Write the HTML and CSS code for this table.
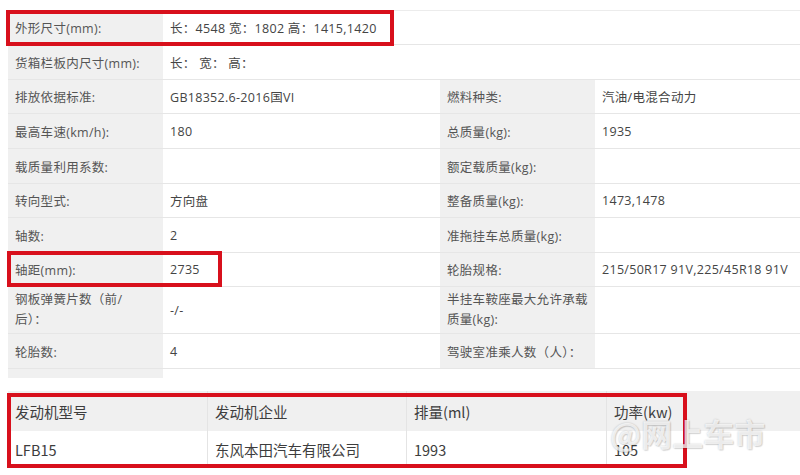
FILE: index.html
```html
<!DOCTYPE html>
<html lang="zh-CN">
<head>
<meta charset="utf-8">
<title>车辆参数</title>
<link rel="stylesheet" href="styles.css">
</head>
<body>
<div class="page">
  <div class="spec">
    <div class="cell lab r1">外形尺寸(mm):</div>
    <div class="cell val wide r1">长：4548 宽：1802 高：1415,1420</div>

    <div class="cell lab">货箱栏板内尺寸(mm):</div>
    <div class="cell val wide">长：&nbsp;宽：&nbsp;高：</div>

    <div class="cell lab">排放依据标准:</div>
    <div class="cell val">GB18352.6-2016国VI</div>
    <div class="cell lab">燃料种类:</div>
    <div class="cell val">汽油/电混合动力</div>

    <div class="cell lab">最高车速(km/h):</div>
    <div class="cell val">180</div>
    <div class="cell lab">总质量(kg):</div>
    <div class="cell val">1935</div>

    <div class="cell lab">载质量利用系数:</div>
    <div class="cell val"></div>
    <div class="cell lab">额定载质量(kg):</div>
    <div class="cell val"></div>

    <div class="cell lab">转向型式:</div>
    <div class="cell val">方向盘</div>
    <div class="cell lab">整备质量(kg):</div>
    <div class="cell val">1473,1478</div>

    <div class="cell lab">轴数:</div>
    <div class="cell val">2</div>
    <div class="cell lab">准拖挂车总质量(kg):</div>
    <div class="cell val"></div>

    <div class="cell lab">轴距(mm):</div>
    <div class="cell val">2735</div>
    <div class="cell lab">轮胎规格:</div>
    <div class="cell val">215/50R17 91V,225/45R18 91V</div>

    <div class="cell lab two">钢板弹簧片数（前/<br>后）：</div>
    <div class="cell val">-/-</div>
    <div class="cell lab two">半挂车鞍座最大允许承载<br>质量(kg):</div>
    <div class="cell val"></div>

    <div class="cell lab">轮胎数:</div>
    <div class="cell val">4</div>
    <div class="cell lab">驾驶室准乘人数（人）：</div>
    <div class="cell val"></div>
  </div>
  <div class="spec-tail"></div>

  <div class="engine">
    <div class="ecell ehead">发动机型号</div>
    <div class="ecell ehead">发动机企业</div>
    <div class="ecell ehead">排量(ml)</div>
    <div class="ecell ehead last">功率(kw)</div>
    <div class="ecell">LFB15</div>
    <div class="ecell">东风本田汽车有限公司</div>
    <div class="ecell">1993</div>
    <div class="ecell last">105</div>
  </div>

  <div class="mark mark-size"></div>
  <div class="mark mark-wheelbase"></div>
  <div class="mark mark-engine"></div>
  <div class="watermark">@网上车市</div>
</div>
</body>
</html>
```

FILE: styles.css
```css
html, body {
  margin: 0;
  padding: 0;
  background: #ffffff;
}

.page {
  position: relative;
  width: 800px;
  height: 475px;
  overflow: hidden;
  padding: 10px 0 0 8px;
  box-sizing: border-box;
  font-family: "Noto Sans CJK SC", "Microsoft YaHei", sans-serif;
  color: #444444;
}

.spec {
  display: grid;
  grid-template-columns: 155px 277px 155px 1fr;
  grid-template-rows: 34px 35px 34px 35px 35px 34px 35px 34px 47px 35px;
  border-top: 1px solid #ececec;
  font-family: "Open Sans", "Noto Sans CJK SC", sans-serif;
  font-size: 12.5px;
  letter-spacing: 0.3px;
}

.cell {
  display: flex;
  align-items: center;
  box-sizing: border-box;
  border-bottom: 1px solid #e6e6e6;
  padding: 0 7px;
  white-space: nowrap;
}

.lab {
  background: #f0f0f0;
  color: #555555;
}

.val {
  background: #ffffff;
  color: #444444;
}

.wide {
  grid-column: span 3;
}

.two {
  line-height: 20px;
}

.spec-tail {
  width: 155px;
  height: 9px;
  background: #f0f0f0;
}

.engine {
  margin-top: 13px;
  display: grid;
  grid-template-columns: 200px 199px 200px 1fr;
  grid-template-rows: 40px 37px;
  font-size: 14.5px;
}

.ecell {
  display: flex;
  align-items: center;
  box-sizing: border-box;
  padding: 0 7px;
  border-right: 1px solid #e4e4e4;
  color: #3d3d3d;
  white-space: nowrap;
}

.ehead {
  background: #f0f0f0;
}

.ecell.last {
  border-right: none;
}

.mark {
  position: absolute;
  border: 4px solid #d8101c;
  box-sizing: border-box;
}

.mark-size {
  left: 6px;
  top: 10px;
  width: 388px;
  height: 36px;
}

.mark-wheelbase {
  left: 7px;
  top: 251px;
  width: 215px;
  height: 36px;
}

.mark-engine {
  left: 7px;
  top: 393px;
  width: 680px;
  height: 75px;
}

.watermark {
  position: absolute;
  left: 610px;
  top: 413px;
  font-size: 31px;
  font-weight: bold;
  color: rgba(255, 255, 255, 0.75);
  text-shadow: 0 0 2px rgba(0, 0, 0, 0.22), 1px 1px 1px rgba(0, 0, 0, 0.12);
  line-height: 40px;
}
```
